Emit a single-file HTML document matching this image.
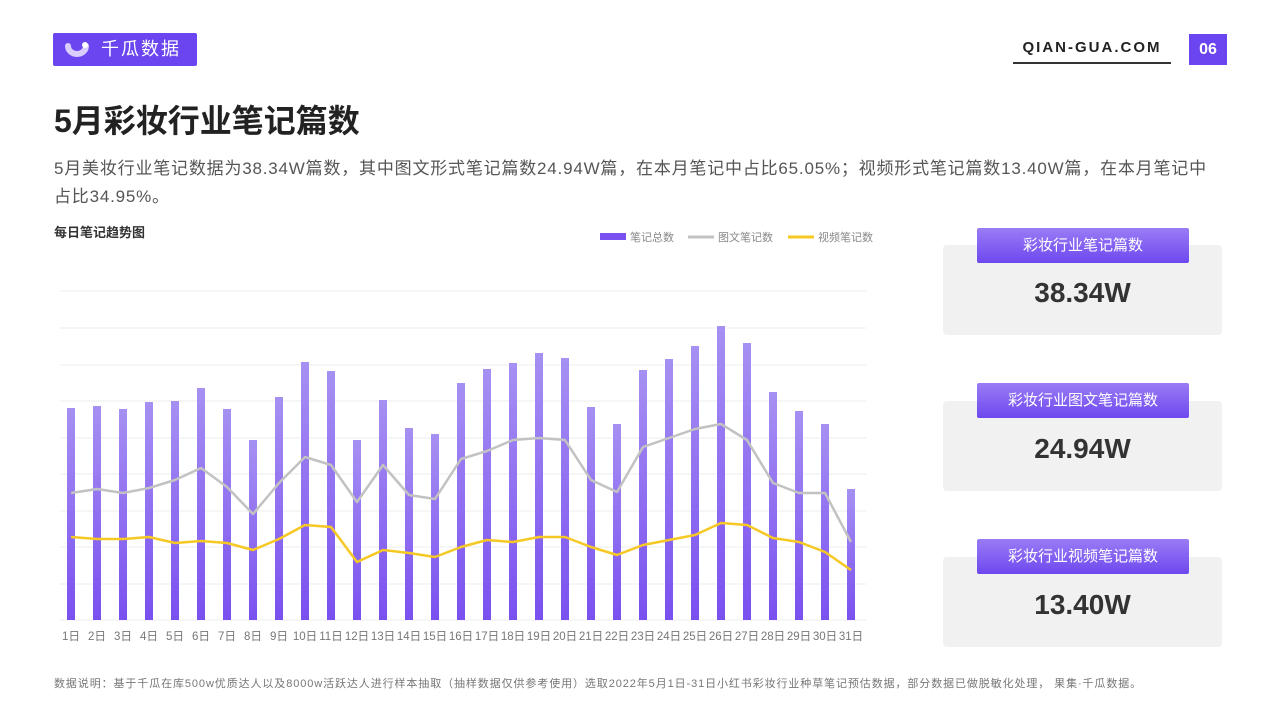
<!DOCTYPE html>
<html><head><meta charset="utf-8"><style>
*{margin:0;padding:0;box-sizing:border-box}
body{width:1280px;height:720px;background:#fff;position:relative;overflow:hidden;font-family:"Liberation Sans","Noto Sans CJK SC",sans-serif;color:#333}
.abs{position:absolute}
.logo{left:53px;top:33px;width:144px;height:33px;background:#6a45f0;border-radius:2px;color:#fff;font-size:18px;line-height:33px;padding-left:48px;letter-spacing:2px}
.site{left:1013px;top:39px;width:158px;font-size:15px;font-weight:bold;letter-spacing:2px;color:#222;text-align:center;padding-bottom:6px;border-bottom:2px solid #333}
.pg{left:1189px;top:34px;width:38px;height:31px;background:#6a45f0;color:#fff;font-weight:bold;font-size:16px;text-align:center;line-height:31px}
h1{position:absolute;left:54px;top:96px;font-size:32px;font-weight:bold;color:#222}
.desc{left:54px;top:155px;width:1180px;font-size:17px;letter-spacing:0.8px;line-height:28px;color:#555}
.sub{left:54px;top:222px;font-size:13px;font-weight:bold;color:#333}
.box{left:943px;width:279px;height:90px;background:#f1f1f2;border-radius:4px;text-align:center;font-size:28px;font-weight:bold;color:#333;padding-top:32px}
.lab{left:977px;width:212px;height:35px;background:linear-gradient(#9a7cf5,#6e48ef);color:#fff;border-radius:2px;text-align:center;font-size:15px;line-height:35px}
.note{left:54px;top:675px;font-size:11px;letter-spacing:0.9px;color:#777;white-space:nowrap}
</style></head><body>
<div class="abs logo">千瓜数据</div>
<svg class="abs" style="left:64px;top:40px" width="26" height="20" viewBox="0 0 26 20"><path d="M4 6 A9 8 0 0 0 22 6" stroke="#d9ccff" stroke-width="6" fill="none" stroke-linecap="round"/><circle cx="21" cy="5" r="3" fill="#fff"/></svg>
<div class="abs site">QIAN-GUA.COM</div>
<div class="abs pg">06</div>
<h1>5月彩妆行业笔记篇数</h1>
<div class="abs desc">5月美妆行业笔记数据为38.34W篇数，其中图文形式笔记篇数24.94W篇，在本月笔记中占比65.05%；视频形式笔记篇数13.40W篇，在本月笔记中<br>占比34.95%。</div>
<div class="abs sub">每日笔记趋势图</div>
<svg class="abs" style="left:0;top:0" width="940" height="660">
<defs><linearGradient id="g" x1="0" y1="0" x2="0" y2="1"><stop offset="0" stop-color="#a690f2"/><stop offset="1" stop-color="#7a50f0"/></linearGradient></defs>
<g stroke="#eeeeee" stroke-width="1">
<line x1="60" y1="291" x2="866" y2="291"/><line x1="60" y1="328" x2="866" y2="328"/><line x1="60" y1="365" x2="866" y2="365"/><line x1="60" y1="401" x2="866" y2="401"/><line x1="60" y1="438" x2="866" y2="438"/><line x1="60" y1="474" x2="866" y2="474"/><line x1="60" y1="511" x2="866" y2="511"/><line x1="60" y1="547" x2="866" y2="547"/><line x1="60" y1="584" x2="866" y2="584"/><line x1="60" y1="620" x2="866" y2="620"/>
</g>
<g fill="url(#g)">
<rect x="67" y="408" width="8" height="212"/><rect x="93" y="406" width="8" height="214"/><rect x="119" y="409" width="8" height="211"/><rect x="145" y="402" width="8" height="218"/><rect x="171" y="401" width="8" height="219"/><rect x="197" y="388" width="8" height="232"/><rect x="223" y="409" width="8" height="211"/><rect x="249" y="440" width="8" height="180"/><rect x="275" y="397" width="8" height="223"/><rect x="301" y="362" width="8" height="258"/><rect x="327" y="371" width="8" height="249"/><rect x="353" y="440" width="8" height="180"/><rect x="379" y="400" width="8" height="220"/><rect x="405" y="428" width="8" height="192"/><rect x="431" y="434" width="8" height="186"/><rect x="457" y="383" width="8" height="237"/><rect x="483" y="369" width="8" height="251"/><rect x="509" y="363" width="8" height="257"/><rect x="535" y="353" width="8" height="267"/><rect x="561" y="358" width="8" height="262"/><rect x="587" y="407" width="8" height="213"/><rect x="613" y="424" width="8" height="196"/><rect x="639" y="370" width="8" height="250"/><rect x="665" y="359" width="8" height="261"/><rect x="691" y="346" width="8" height="274"/><rect x="717" y="326" width="8" height="294"/><rect x="743" y="343" width="8" height="277"/><rect x="769" y="392" width="8" height="228"/><rect x="795" y="411" width="8" height="209"/><rect x="821" y="424" width="8" height="196"/><rect x="847" y="489" width="8" height="131"/>
</g>
<polyline fill="none" stroke="#c2c2c2" stroke-width="2.5" stroke-linejoin="round" points="71,493 97,489 123,493 149,488 175,480 201,468 227,487 253,514 279,483 305,457 331,465 357,502 383,465 409,495 435,499 461,459 487,451 513,440 539,438 565,440 591,480 617,492 643,447 669,438 695,429 721,424 747,440 773,483 799,493 825,493 851,542"/>
<polyline fill="none" stroke="#f5c824" stroke-width="2.5" stroke-linejoin="round" points="71,537 97,539 123,539 149,537 175,543 201,541 227,543 253,550 279,539 305,525 331,527 357,562 383,550 409,553 435,557 461,547 487,540 513,542 539,537 565,537 591,547 617,555 643,545 669,540 695,535 721,523 747,525 773,538 799,542 825,552 851,570"/>
<rect x="600" y="233" width="26" height="7" fill="#7a50f0"/>
<text x="630" y="241" font-size="11" fill="#888">笔记总数</text>
<line x1="688" y1="237" x2="714" y2="237" stroke="#c2c2c2" stroke-width="3"/>
<text x="718" y="241" font-size="11" fill="#888">图文笔记数</text>
<line x1="788" y1="237" x2="814" y2="237" stroke="#f5c824" stroke-width="3"/>
<text x="818" y="241" font-size="11" fill="#888">视频笔记数</text>
<g font-size="11.5" fill="#777" text-anchor="middle">
<text x="71" y="640">1日</text><text x="97" y="640">2日</text><text x="123" y="640">3日</text><text x="149" y="640">4日</text><text x="175" y="640">5日</text><text x="201" y="640">6日</text><text x="227" y="640">7日</text><text x="253" y="640">8日</text><text x="279" y="640">9日</text><text x="305" y="640">10日</text><text x="331" y="640">11日</text><text x="357" y="640">12日</text><text x="383" y="640">13日</text><text x="409" y="640">14日</text><text x="435" y="640">15日</text><text x="461" y="640">16日</text><text x="487" y="640">17日</text><text x="513" y="640">18日</text><text x="539" y="640">19日</text><text x="565" y="640">20日</text><text x="591" y="640">21日</text><text x="617" y="640">22日</text><text x="643" y="640">23日</text><text x="669" y="640">24日</text><text x="695" y="640">25日</text><text x="721" y="640">26日</text><text x="747" y="640">27日</text><text x="773" y="640">28日</text><text x="799" y="640">29日</text><text x="825" y="640">30日</text><text x="851" y="640">31日</text>
</g>
</svg>
<div class="abs box" style="top:245px">38.34W</div>
<div class="abs lab" style="top:228px">彩妆行业笔记篇数</div>
<div class="abs box" style="top:401px">24.94W</div>
<div class="abs lab" style="top:383px">彩妆行业图文笔记篇数</div>
<div class="abs box" style="top:557px">13.40W</div>
<div class="abs lab" style="top:539px">彩妆行业视频笔记篇数</div>
<div class="abs note">数据说明：基于千瓜在库500w优质达人以及8000w活跃达人进行样本抽取（抽样数据仅供参考使用）选取2022年5月1日-31日小红书彩妆行业种草笔记预估数据，部分数据已做脱敏化处理， 果集·千瓜数据。</div>
</body></html>
